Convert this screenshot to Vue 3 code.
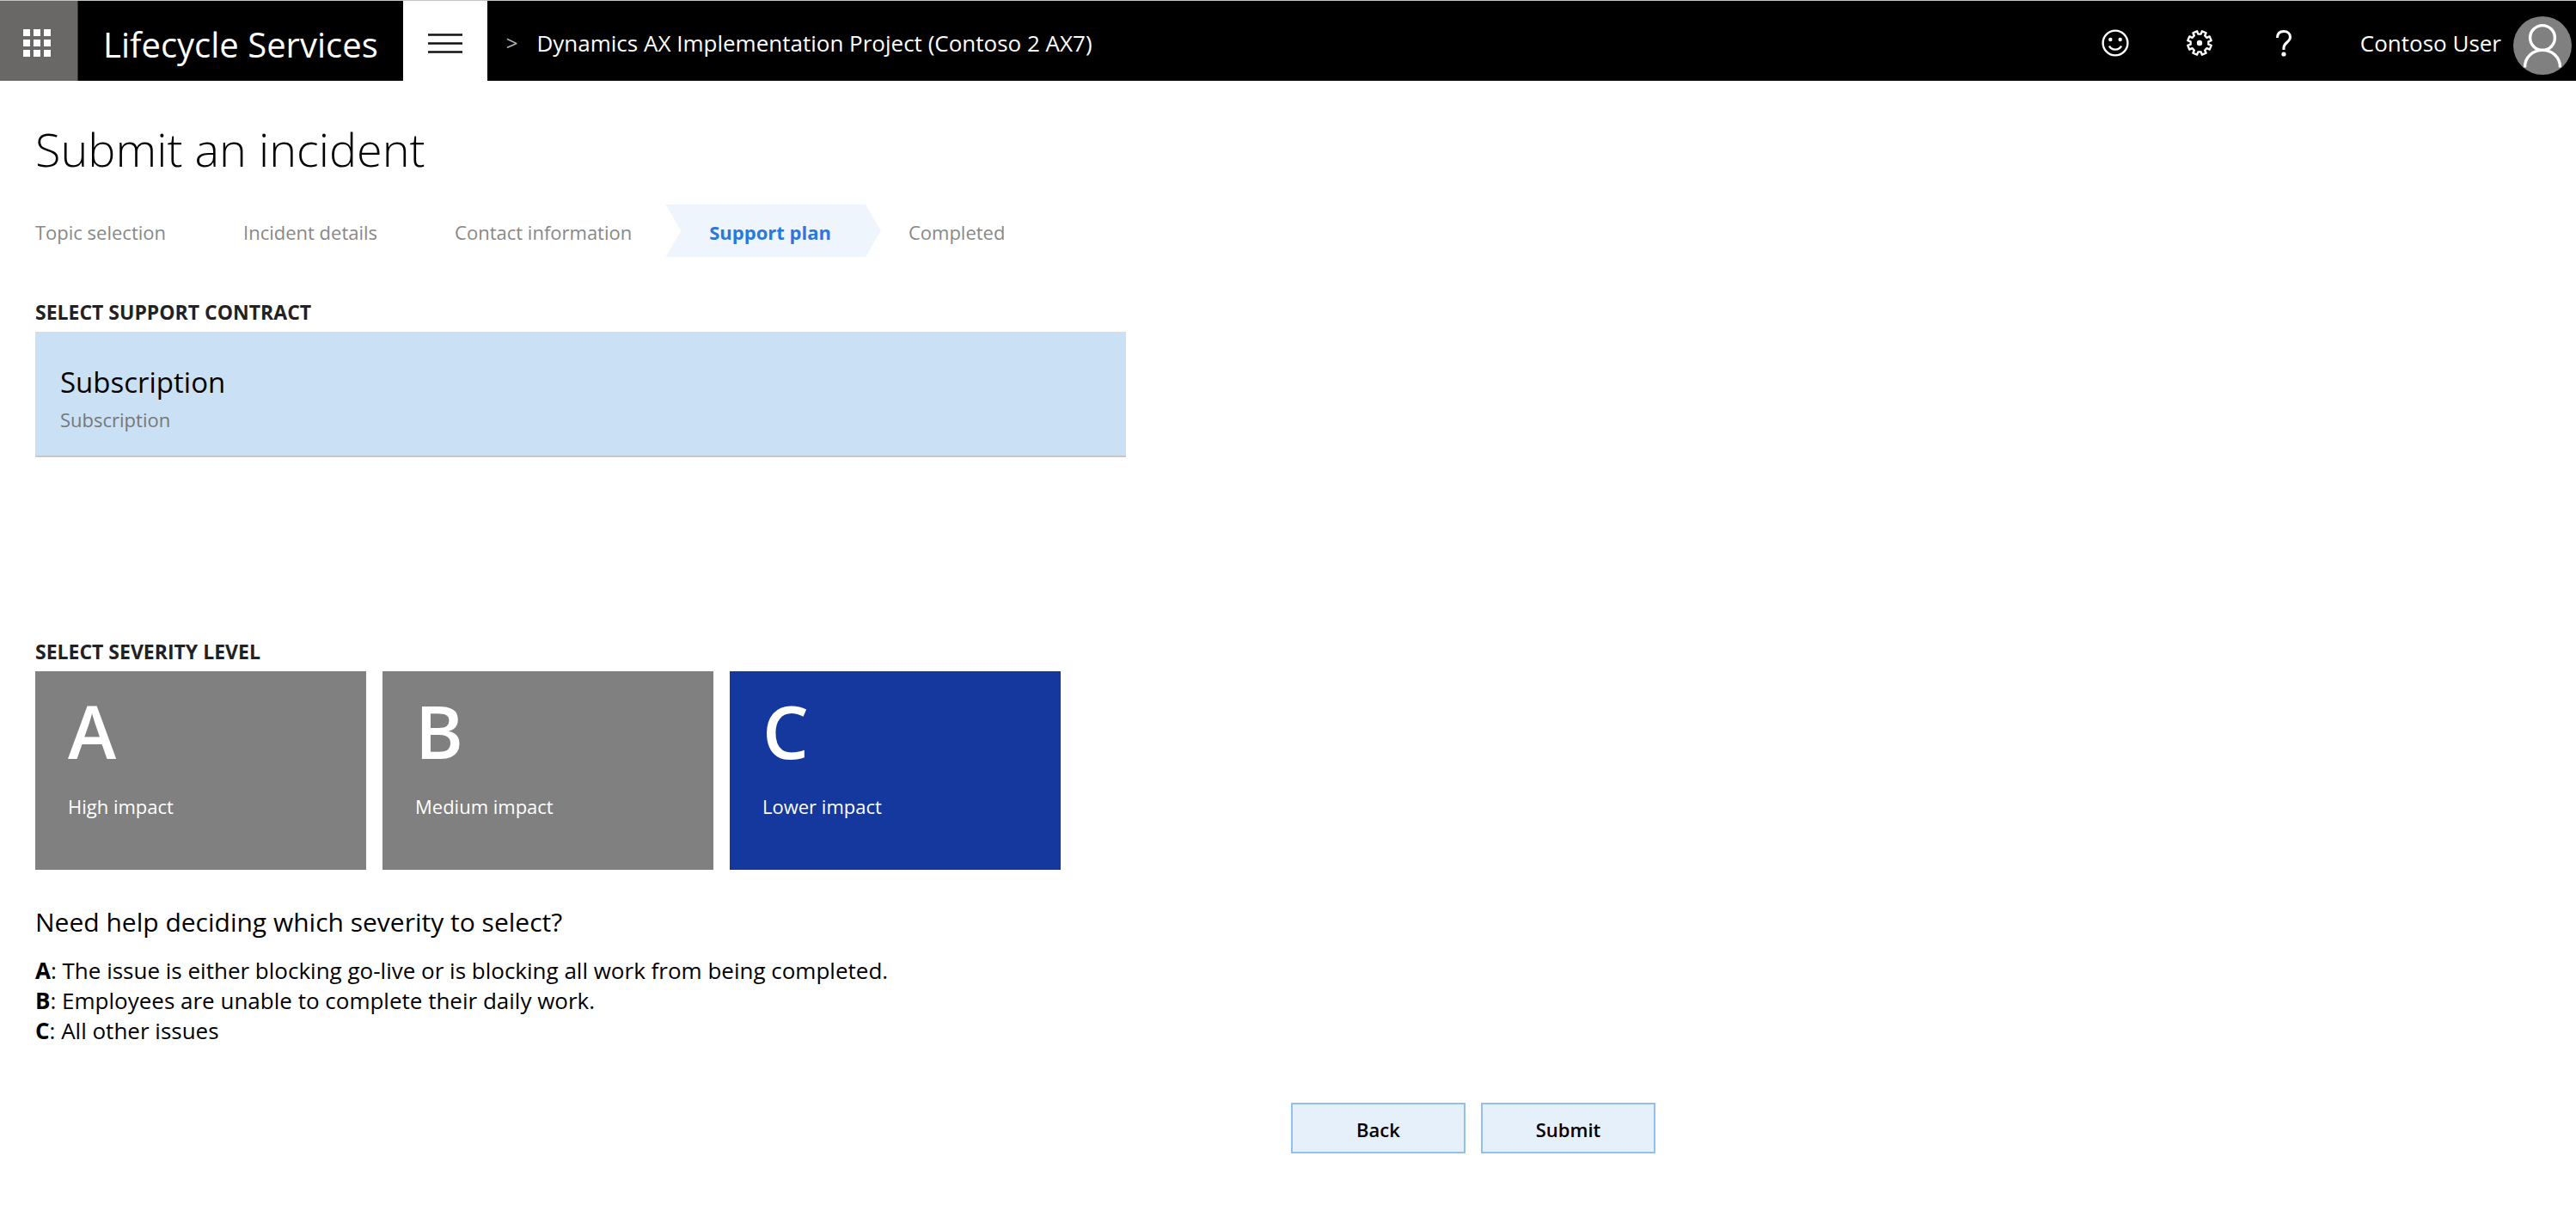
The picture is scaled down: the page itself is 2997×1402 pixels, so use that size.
<script setup>
import { ref } from 'vue'

const steps = ['Topic selection', 'Incident details', 'Contact information', 'Support plan', 'Completed']
const currentStep = 'Support plan'

const severities = [
  { level: 'A', impact: 'High impact', help: 'The issue is either blocking go-live or is blocking all work from being completed.' },
  { level: 'B', impact: 'Medium impact', help: 'Employees are unable to complete their daily work.' },
  { level: 'C', impact: 'Lower impact', help: 'All other issues' },
]
const severity = ref('C')

// Outline of the settings gear: eight teeth round a 32-unit box
const gearPoints = Array.from({ length: 8 }, (_, i) => {
  const at = (radius, degrees) => {
    const a = ((i * 45 + degrees) * Math.PI) / 180
    return `${(16 + radius * Math.sin(a)).toFixed(2)},${(16 - radius * Math.cos(a)).toFixed(2)}`
  }
  return [at(10.5, 9), at(14, 12), at(14, 33), at(10.5, 36)].join(' ')
}).join(' ')
</script>

<template>
  <div class="page">
    <header class="topbar">
      <button class="launcher" type="button" aria-label="App launcher">
        <svg width="32" height="32" viewBox="0 0 32 32" fill="#fff" aria-hidden="true">
          <template v-for="y in 3" :key="y">
            <rect v-for="x in 3" :key="x" :x="(x - 1) * 12" :y="(y - 1) * 12" width="8" height="8" />
          </template>
        </svg>
      </button>
      <a class="brand" href="#">Lifecycle Services</a>
      <button class="menu" type="button" aria-label="Menu">
        <svg width="40" height="24" viewBox="0 0 40 24" stroke="#111" stroke-width="2.4" aria-hidden="true">
          <path d="M0 2.5H40M0 12.5H40M0 22.5H40" />
        </svg>
      </button>
      <nav class="crumbs" aria-label="Breadcrumb">
        <span class="sep">&gt;</span>
        <a href="#">Dynamics AX Implementation Project (Contoso 2 AX7)</a>
      </nav>
      <div class="tools">
        <button class="tool" type="button" aria-label="Feedback">
          <svg width="32" height="32" viewBox="0 0 32 32" fill="none" stroke="#fff" stroke-width="2.4" aria-hidden="true">
            <circle cx="16" cy="16" r="14.4" />
            <path d="M9 19.5C11.5 25 20.5 25 23 19.5" />
            <circle cx="10.3" cy="12" r="2.2" fill="#fff" stroke="none" />
            <circle cx="21.7" cy="12" r="2.2" fill="#fff" stroke="none" />
          </svg>
        </button>
        <button class="tool" type="button" aria-label="Settings">
          <svg width="32" height="32" viewBox="0 0 32 32" fill="none" stroke="#fff" stroke-width="2.4" stroke-linejoin="round" aria-hidden="true">
            <polygon :points="gearPoints" />
            <circle cx="16" cy="16" r="3.2" fill="#fff" stroke="none" />
          </svg>
        </button>
        <button class="tool" type="button" aria-label="Help">
          <svg width="32" height="32" viewBox="0 0 32 32" fill="none" stroke="#fff" stroke-width="3" aria-hidden="true">
            <path d="M8.5 10C8.5 5 11.5 2.5 16 2.5S23.5 5 23.5 9.2C23.5 15 16 15.5 16 21.5V24" />
            <circle cx="16" cy="29" r="2.6" fill="#fff" stroke="none" />
          </svg>
        </button>
      </div>
      <a class="user" href="#">
        <span class="user-name">Contoso User</span>
        <svg width="68" height="68" viewBox="0 0 68 68" fill="none" stroke="#fff" stroke-width="3.4" aria-hidden="true">
          <circle cx="34" cy="34" r="34" fill="#808080" stroke="none" />
          <circle cx="34" cy="25" r="14.4" />
          <path d="M13.5 59.5C13.5 47 23 39.4 34 39.4S54.5 47 54.5 59.5" />
        </svg>
      </a>
    </header>

    <main class="content">
      <h1>Submit an incident</h1>
      <ol class="steps">
        <li v-for="s in steps" :key="s" :class="{ active: s === currentStep }" :aria-current="s === currentStep ? 'step' : undefined">{{ s }}</li>
      </ol>

      <section class="contracts">
        <h2>SELECT SUPPORT CONTRACT</h2>
        <button class="contract" type="button" aria-pressed="true">
          <span class="contract-name">Subscription</span>
          <span class="contract-type">Subscription</span>
        </button>
      </section>

      <section>
        <h2>SELECT SEVERITY LEVEL</h2>
        <div class="cards">
          <button
            v-for="s in severities"
            :key="s.level"
            class="card"
            :class="{ selected: severity === s.level }"
            type="button"
            :aria-pressed="severity === s.level"
            @click="severity = s.level"
          >
            <span class="level">{{ s.level }}</span>
            <span>{{ s.impact }}</span>
          </button>
        </div>
      </section>

      <section class="help">
        <h3>Need help deciding which severity to select?</h3>
        <p v-for="s in severities" :key="s.level"><b>{{ s.level }}</b>: {{ s.help }}</p>
      </section>

      <div class="actions">
        <button class="action" type="button">Back</button>
        <button class="action" type="button">Submit</button>
      </div>
    </main>
  </div>
</template>

<style>
body {
  margin: 0;
  background: #fff;
}
</style>

<style scoped>
.page,
.page button {
  font-family: "Open Sans", "Noto Sans", sans-serif;
}
.page {
  color: #000;
  font-size: 22px;
  line-height: 32px;
}
.page * {
  box-sizing: border-box;
}
button {
  margin: 0;
  border: 0;
  font-size: 22px;
  line-height: 32px;
  cursor: pointer;
}
a {
  color: inherit;
  text-decoration: none;
}
svg {
  display: block;
  flex: none;
}

.topbar {
  display: flex;
  height: 94px;
  border-top: 1px solid #c4c4c4;
  background: #000;
  color: #fff;
  font-size: 26px;
  white-space: nowrap;
}
.launcher,
.menu,
.tool {
  display: flex;
  flex: none;
  align-items: center;
  justify-content: center;
  padding: 4px 0 0;
}
.launcher {
  width: 91px;
  padding-right: 4px;
  border-right: 1px solid #333;
  background: #6a6767;
}
.brand {
  display: flex;
  align-items: center;
  padding: 8px 29px 0;
  font-size: 40px;
}
.menu {
  width: 98px;
  background: #fff;
}
.crumbs {
  display: flex;
  flex: 1;
  align-items: center;
  gap: 22px;
  padding: 5px 0 0 22px;
}
.sep {
  color: #b5b5b5;
  font-size: 24px;
}
.tools {
  display: flex;
}
.tool {
  width: 98px;
  background: transparent;
}
.user {
  display: flex;
  align-items: center;
  gap: 14px;
  padding: 10px 5px 0 40px;
}
.user-name {
  margin-top: -5px;
}

.content {
  max-width: 1967px;
  padding: 43px 41px 60px;
}
h1 {
  margin: 0;
  font-size: 54px;
  font-weight: 300;
  line-height: 72px;
}
h2 {
  margin: 0 0 7px;
  color: #222;
  font-size: 23px;
  font-weight: 700;
}
.steps {
  display: flex;
  gap: 90px;
  margin: 29px 0 48px;
  padding: 0;
  color: #888;
  list-style: none;
}
.steps li {
  position: relative;
  z-index: 0;
  padding: 16px 0 13px;
}
.steps .active {
  color: #2b78dc;
  font-weight: 700;
}
.steps .active::before {
  position: absolute;
  z-index: -1;
  inset: 0 -58px 0 -51px;
  background: #eff5fc;
  clip-path: polygon(0 0, calc(100% - 18px) 0, 100% 50%, calc(100% - 18px) 100%, 0 100%, 18px 50%);
  content: "";
}

.contracts {
  min-height: 395px;
}
.contract {
  display: flex;
  flex-direction: column;
  gap: 5px;
  width: 100%;
  max-width: 1269px;
  padding: 35px 29px 26px;
  border-top: 2px solid #dcdcdc;
  border-bottom: 2px solid #c8c8c8;
  background: #cae0f5;
  text-align: left;
}
.contract-name {
  color: #000;
  font-size: 33px;
  line-height: 44px;
}
.contract-type {
  color: #777;
}

.cards {
  display: flex;
  gap: 19px;
}
.card {
  display: flex;
  flex-direction: column;
  gap: 22px;
  width: 385px;
  padding: 19px 38px 58px;
  background: #808080;
  color: #fff;
  text-align: left;
}
.card.selected {
  background: #15389f;
}
.level {
  font-size: 85px;
  font-weight: 600;
  line-height: 100px;
}

.help {
  margin-top: 41px;
  font-size: 26px;
  line-height: 35px;
}
h3 {
  margin: 0 0 19px;
  font-size: 30px;
  font-weight: 400;
  line-height: 40px;
}
p {
  margin: 0;
}

.actions {
  display: flex;
  justify-content: flex-end;
  gap: 18px;
  margin-top: 66px;
}
.action {
  width: 203px;
  padding: 13px 0 10px;
  border: 2px solid #91c0ec;
  background: #e6f0fb;
  color: #000;
  font-weight: 600;
}
</style>
